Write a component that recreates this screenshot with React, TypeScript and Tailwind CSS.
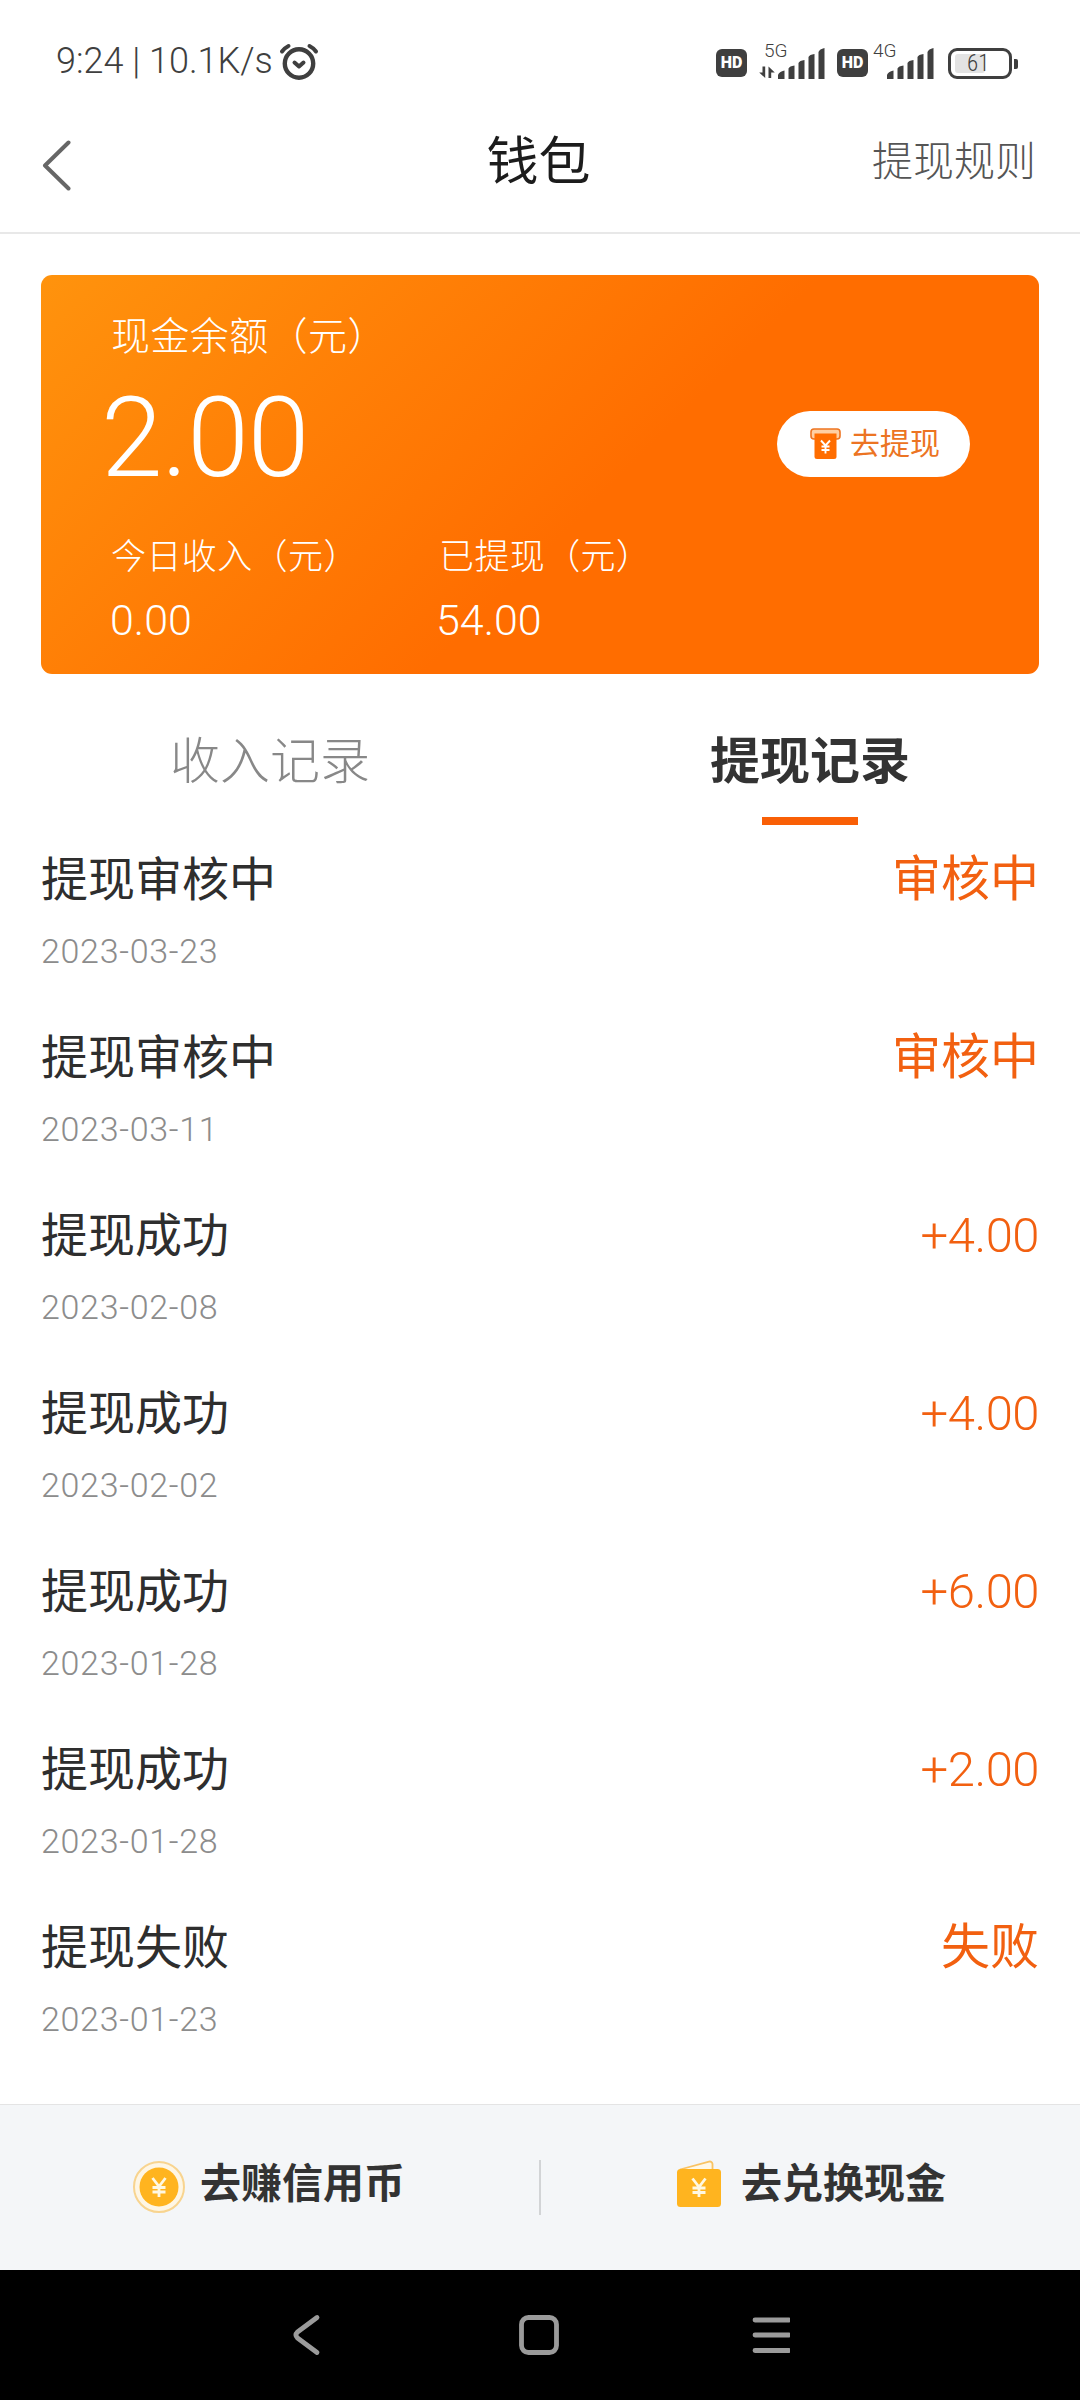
import { clsx } from "clsx";

type Signal = { label: string; arrows?: boolean };

const records = [
  { title: "提现审核中", date: "2023-03-23", status: "审核中" },
  { title: "提现审核中", date: "2023-03-11", status: "审核中" },
  { title: "提现成功", date: "2023-02-08", status: "+4.00" },
  { title: "提现成功", date: "2023-02-02", status: "+4.00" },
  { title: "提现成功", date: "2023-01-28", status: "+6.00" },
  { title: "提现成功", date: "2023-01-28", status: "+2.00" },
  { title: "提现失败", date: "2023-01-23", status: "失败" },
];

function AlarmIcon() {
  return (
    <svg width="40" height="40" viewBox="0 0 40 40" fill="none" stroke="#3f3f3f" strokeLinecap="round">
      <circle cx="20" cy="21.5" r="14.2" strokeWidth="4.4" />
      <path d="M15.5 20.5l4.500 4 4.500-4" strokeWidth="4" strokeLinejoin="round" />
      <path d="M3 9.500q2.500-3.500 6.500-5.500M37 9.500q-2.500-3.500-6.500-5.500" strokeWidth="4" />
    </svg>
  );
}

function HdBadge() {
  return (
    <div className="flex h-7 w-[31px] items-center justify-center rounded-[6px] bg-[#3f3f3f] text-[16px] font-black leading-none text-white">
      HD
    </div>
  );
}

function SignalBars({ label, arrows }: Signal) {
  return (
    <div className="relative h-[36px] w-[68px]">
      <span className="absolute left-[5px] top-[-1px] text-[19px] font-light leading-[18px]">
        {label}
      </span>
      <svg className="absolute inset-0" width="68" height="36" viewBox="0 0 68 36" fill="#3f3f3f">
        {arrows && (
          <path d="M3.500 23.500h2.700v11.500l-6-5.500h3.300zM9.500 35h2.700v-5.500h3.600l-6.300-6z" />
        )}
        <path d="M19 36v-4q1-3.500 6.500-4.500v8.500zM29.500 36v-10.500q1-2.500 6-3v13.500zM39.500 36v-16q1-2.500 6-3v19zM49.500 36v-22q1-2.500 6-3v25zM59.500 36v-27q1-3 6-4v31z" />
      </svg>
    </div>
  );
}

function StatusBar() {
  return (
    <div className="flex h-[88px] justify-between pl-14 pr-[62px] text-[#3f3f3f]">
      <div className="flex items-start pt-[41px]">
        <span className="w-[223px] whitespace-pre text-[36px] font-light leading-[40px]">
          9:24 | 10.1K/s
        </span>
        <div className="pt-[1px]">
          <AlarmIcon />
        </div>
      </div>
      <div className="flex items-start pt-[43px]">
        <div className="pt-[6px]"><HdBadge /></div>
        <div className="ml-[12px]"><SignalBars label="5G" arrows /></div>
        <div className="ml-[10px] pt-[6px]"><HdBadge /></div>
        <div><SignalBars label="4G" /></div>
        <div className="ml-[12px] mt-[5px] flex items-center">
          <div className="relative h-[31px] w-[64px] rounded-[9px] border-[3px] border-[#3f3f3f]">
            <div className="absolute left-[4px] top-[3px] h-[19px] w-[30px] rounded-[3px] bg-[#e3e3e3]" />
            <span className="absolute left-[16px] top-[1px] text-[23px] font-light leading-[23px] font-stretch-condensed">61</span>
          </div>
          <div className="ml-[2px] h-[10px] w-[4px] rounded-r-[2px] bg-[#3f3f3f]" />
        </div>
      </div>
    </div>
  );
}

function NavBar() {
  return (
    <div className="grid h-[146px] grid-cols-3 items-center border-b-2 border-[#e8e8e8] pl-[41px] pr-[44px]">
      <svg className="mt-[10px]" width="32" height="52" viewBox="0 0 32 52" fill="none" stroke="#666" strokeWidth="4" strokeLinecap="round" strokeLinejoin="round">
        <path d="M27.500 3.500L4 26.500L27.500 49.500" />
      </svg>
      <h1 className="pt-[5px] text-center text-[52px] leading-[60px] text-[#1c1c1c]">钱包</h1>
      <span className="pt-[4px] text-right text-[41px] font-light leading-[50px] text-[#555]">提现规则</span>
    </div>
  );
}

function WithdrawIcon() {
  return (
    <svg width="31" height="32" viewBox="0 0 31 32">
      <rect x="1" y="1" width="29" height="10" rx="3" fill="#ffd0a3" stroke="#ee7420" strokeWidth="1.6" />
      <path d="M4.500 5.500h22v23q0 2.500-2.500 2.500h-17q-2.500 0-2.500-2.500z" fill="#ff6d00" />
      <path d="M11 12.500l4.500 5 4.500-5M15.500 17.500v8M11.500 18.500h8M11.500 22h8" fill="none" stroke="#fff" strokeWidth="1.9" />
    </svg>
  );
}

function BalanceCard() {
  return (
    <div className="mx-[41px] mt-[41px] flex h-[399px] items-start justify-between rounded-[11px] bg-[linear-gradient(135deg,#ff930d_0%,#ff6d00_56%)] pr-[69px] text-white">
      <div className="pl-[70px] pt-[37px]">
        <div className="text-[39px] font-light leading-[50px] tracking-[0.4px]">现金余额（元）</div>
        <div className="-ml-[10px] mt-[21px] text-[111px] font-light leading-[110px] tracking-[-1px]">2.00</div>
        <div className="mt-[40px] flex">
          <div className="w-[328px]">
            <div className="text-[35px] font-light leading-[50px] tracking-[0.4px]">今日收入（元）</div>
            <div className="-ml-px mt-[12px] text-[43px] font-light leading-[50px]">0.00</div>
          </div>
          <div>
            <div className="text-[35px] font-light leading-[50px] tracking-[0.4px]">已提现（元）</div>
            <div className="-ml-[3px] mt-[12px] text-[43px] font-light leading-[50px]">54.00</div>
          </div>
        </div>
      </div>
      <button className="mt-[136px] flex h-[66px] w-[193px] items-center gap-[9px] rounded-full bg-white pl-[33px]">
        <WithdrawIcon />
        <span className="text-[30px] leading-[40px] text-[#ec7423]">去提现</span>
      </button>
    </div>
  );
}

function Tabs() {
  return (
    <div className="grid h-[151px] grid-cols-2 pt-[58px] text-center text-[50px] leading-[60px]">
      <div className="font-light text-[#888]">收入记录</div>
      <div className="flex flex-col items-center font-bold text-[#333]">
        提现记录
        <div className="mt-[25px] h-2 w-24 bg-[#f95f06]" />
      </div>
    </div>
  );
}

function RecordRow({ title, date, status }: (typeof records)[number]) {
  const isAmount = status.startsWith("+");
  return (
    <div className="flex h-[178px] shrink-0 items-start justify-between">
      <div>
        <div className="text-[47px] leading-[60px] text-[#2e2e2e]">{title}</div>
        <div className="mt-[21px] text-[34px] font-light leading-[40px] tracking-[0.7px] text-[#8c8c8c]">{date}</div>
      </div>
      <div
        className={clsx(
          "leading-[60px] text-[#f26010]",
          isAmount ? "text-[49px] font-light tracking-[-0.5px]" : "text-[49px]"
        )}
      >
        {status}
      </div>
    </div>
  );
}

function CoinIcon() {
  return (
    <svg width="54" height="54" viewBox="0 0 54 54">
      <circle cx="27" cy="27" r="25" fill="#fef6e4" stroke="#f8d48f" strokeWidth="2" />
      <circle cx="27" cy="27" r="19.500" fill="#ffb41f" />
      <path d="M20.500 18l6.500 8.500 6.500-8.500M27 26.500v10.500M20.500 27.500h13M20.500 32h13" fill="none" stroke="#fff8e2" strokeWidth="2.800" />
    </svg>
  );
}

function WalletIcon() {
  return (
    <svg width="46" height="48" viewBox="0 0 46 48">
      <path d="M4 9.500L33 1.600q3-.6 3.500 2.400v6" fill="#fff8e6" stroke="#f9c363" strokeWidth="1.800" />
      <rect x="1" y="9" width="44" height="38" rx="3.500" fill="#ffb41f" />
      <path d="M16.500 18.500l6.500 8.500 6.500-8.500M23 27v10M16.500 28h13M16.500 32.500h13" fill="none" stroke="#fff8e2" strokeWidth="2.800" />
    </svg>
  );
}

function Footer() {
  return (
    <div className="flex h-[166px] items-start border-t border-[#e4e4e4] bg-[#f4f6f8] pt-[48px] text-[41px] font-bold leading-[62px] text-[#333]">
      <div className="flex w-[539px] pl-[132px]">
        <div className="pt-[7px]"><CoinIcon /></div>
        <span className="ml-[14px]">去赚信用币</span>
      </div>
      <div className="mt-[7px] h-[55px] w-[2px] bg-[#d2d4d6]" />
      <div className="flex flex-1 pl-[135px]">
        <div className="pt-[7px]"><WalletIcon /></div>
        <span className="ml-[19px]">去兑换现金</span>
      </div>
    </div>
  );
}

function SystemNav() {
  return (
    <div className="flex h-[130px] justify-center bg-black pt-[42px]">
      <svg width="500" height="46" viewBox="290 0 500 46" fill="none" stroke="#9b9b9b" strokeWidth="4.800" strokeLinecap="round">
        <path d="M317 5.500L297.500 20q-3 3 0 6L317 40.500" strokeLinejoin="round" />
        <rect x="521.500" y="5.500" width="35" height="35" rx="7" />
        <path d="M755 8h34M755 23h34M755 38.500h34" />
      </svg>
    </div>
  );
}

export default function App() {
  return (
    <div className="flex h-[2400px] w-[1080px] flex-col overflow-hidden bg-white font-[Roboto,'Noto_Sans_CJK_SC',sans-serif]" lang="zh-CN">
      <StatusBar />
      <NavBar />
      <BalanceCard />
      <Tabs />
      <div className="min-h-0 flex-1 overflow-hidden px-[41px] pt-[25px]">
        {records.map((r, i) => (
          <RecordRow key={i} {...r} />
        ))}
      </div>
      <Footer />
      <SystemNav />
    </div>
  );
}
